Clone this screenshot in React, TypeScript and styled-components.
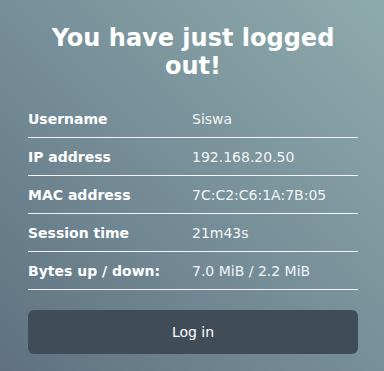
import React from "react";
import styled, { createGlobalStyle } from "styled-components";

const Global = createGlobalStyle`
  html, body { margin: 0; padding: 0; }
  body {
    width: 384px;
    height: 371px;
    overflow: hidden;
    font-family: "DejaVu Sans", "Liberation Sans", sans-serif;
    background: linear-gradient(225deg, #8eabac 0%, #778f99 50%, #5f7181 100%);
    color: #fff;
  }
`;

const Page = styled.main`
  box-sizing: border-box;
  width: 384px;
  height: 371px;
  padding: 24px 26px 0 28px;
  display: flex;
  flex-direction: column;
`;

const Title = styled.h1`
  margin: 0 0 20px;
  font-size: 24px;
  line-height: 28px;
  font-weight: bold;
  text-align: center;
  color: #fff;
`;

const Table = styled.div`
  display: flex;
  flex-direction: column;
`;

const Row = styled.div`
  display: grid;
  grid-template-columns: 164px 1fr;
  align-items: center;
  height: 38px;
  box-sizing: border-box;
  border-bottom: 1px solid rgba(255, 255, 255, 0.9);
  font-size: 14px;
`;

const Label = styled.span`
  font-weight: bold;
  color: #fff;
`;

const Value = styled.span`
  color: #f1f4f5;
`;

const Button = styled.button`
  margin-top: 20px;
  height: 44px;
  width: 100%;
  border: none;
  border-radius: 6px;
  background: #404d59;
  color: #fff;
  font-family: "DejaVu Sans", "Liberation Sans", sans-serif;
  font-size: 14px;
  cursor: pointer;
`;

const rows: [string, string][] = [
  ["Username", "Siswa"],
  ["IP address", "192.168.20.50"],
  ["MAC address", "7C:C2:C6:1A:7B:05"],
  ["Session time", "21m43s"],
  ["Bytes up / down:", "7.0 MiB / 2.2 MiB"],
];

export default function App() {
  return (
    <>
      <Global />
      <Page>
        <Title>You have just logged out!</Title>
        <Table>
          {rows.map(([k, v]) => (
            <Row key={k}>
              <Label>{k}</Label>
              <Value>{v}</Value>
            </Row>
          ))}
        </Table>
        <Button>Log in</Button>
      </Page>
    </>
  );
}
